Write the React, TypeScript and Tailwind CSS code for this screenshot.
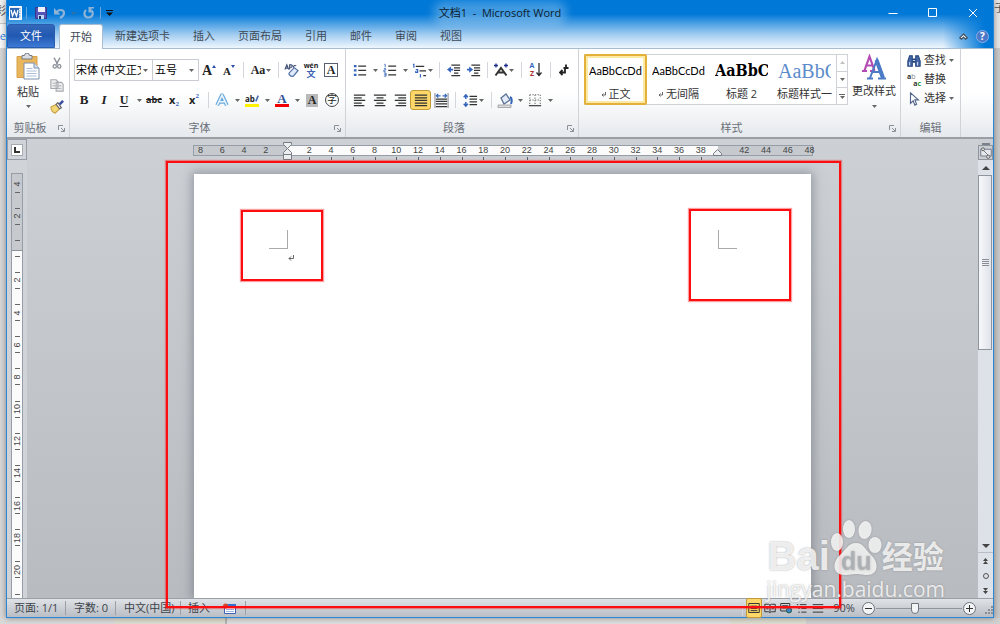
import type { ReactNode } from 'react';

const TABS = ['新建选项卡', '插入', '页面布局', '引用', '邮件', '审阅', '视图'];

// horizontal ruler goes from -8 to 48 in steps of two, vertical one from -4 to 20
const H_MARKS = Array.from({ length: 29 }, (_, i) => i * 2 - 8);
const V_MARKS = Array.from({ length: 13 }, (_, i) => i * 2 - 4);

function Caret({ className = '' }: { className?: string }) {
  return (
    <svg viewBox="0 0 5 3" className={`h-[3px] w-[5px] shrink-0 ${className}`} fill="#666">
      <path d="M0 0h5L2.5 3z" />
    </svg>
  );
}

function Drop({ label }: { label: string }) {
  return (
    <button aria-label={label} className="flex h-5 w-[10px] items-center justify-center">
      <Caret />
    </button>
  );
}

function Tool({ label, children, className = 'w-5' }: { label: string; children: ReactNode; className?: string }) {
  return (
    <button aria-label={label} title={label} className={`flex h-5 shrink-0 items-center justify-center text-[#222] ${className}`}>
      {children}
    </button>
  );
}

function Sep({ className = 'w-2' }: { className?: string }) {
  return (
    <span className={`flex h-4 shrink-0 justify-center ${className}`}>
      <span className="w-px bg-[#d3d6da]" />
    </span>
  );
}

function Icon({ children, className = 'size-4' }: { children: ReactNode; className?: string }) {
  return (
    <svg viewBox="0 0 16 16" className={`shrink-0 ${className}`} fill="none" stroke="#333" strokeWidth="1.3">
      {children}
    </svg>
  );
}

function Group({ title, launcher = true, className, children }: { title: string; launcher?: boolean; className: string; children: ReactNode }) {
  return (
    <section className={`flex shrink-0 flex-col border-r border-[#d0d3d8] ${className}`}>
      <div className="h-[70px]">{children}</div>
      <div className="flex h-[18px] items-center text-[#6a6f78]">
        <h2 className="flex-1 text-center">{title}</h2>
        {launcher && (
          <button aria-label={`${title}选项`} className="flex w-4 justify-center">
            <svg viewBox="0 0 7 7" className="size-[7px]" fill="none" stroke="#8b9097">
              <path d="M.5 5V.5H5M3 3l3 3M6.5 3v3.5H3" />
            </svg>
          </button>
        )}
      </div>
    </section>
  );
}

function TitleBar() {
  return (
    <div className="grid h-6 grid-cols-[1fr_auto_1fr] items-center pt-[2px]">
      <div className="flex items-center pl-[2px]">
        <svg viewBox="0 0 13 14" className="h-[14px] w-[13px]">
          <path d="M.5.5h12v13H.5z" fill="#e6f1fc" stroke="#fff" />
          <path d="M10 2.500h1.500M10 5h1.500M10 7.500h1.500M10 10h1.500" stroke="#7ea7d8" />
          <path d="M1 2h9v10H1z" fill="#2c66b5" />
          <path d="M2 4l1.500 6 2-5 2 5L9 4" fill="none" stroke="#fff" strokeWidth="1.3" />
        </svg>
        <span className="mx-1 h-3 w-px bg-[#6fa5d6]" />
        <Tool label="保存" className="ml-[2px] w-4">
          <svg viewBox="0 0 12 12" className="size-3">
            <path d="M.5.5h11v11H.5z" fill="#5552b8" stroke="#3b388a" />
            <path d="M3 0h7v5H3z" fill="#eef3fb" />
            <path d="M3 8h6v4H3z" fill="#b9d7f5" />
            <path d="M4 9h2v3H4z" fill="#222c66" />
          </svg>
        </Tool>
        <Tool label="撤消" className="w-[22px]">
          <svg viewBox="0 0 12 12" className="size-3" fill="none" stroke="#8fb3d6" strokeWidth="2.2">
            <path d="M3 5c2-3 7-2.500 7 1 0 2.500-2 4-4 5" />
            <path d="M0 1v6.500h6.500z" fill="#8fb3d6" stroke="none" />
          </svg>
        </Tool>
        <Caret className="opacity-50" />
        <Tool label="重复" className="ml-[2px] w-[22px]">
          <svg viewBox="0 0 12 12" className="size-3" fill="none" stroke="#8fb3d6" strokeWidth="2.2">
            <path d="M3 3C0 6 1.500 10.500 5.500 10.500S11 6 8.500 3.500" />
            <path d="M5.500 0h5.500v1.500H8.500v4h-3z" fill="#8fb3d6" stroke="none" />
          </svg>
        </Tool>
        <span className="h-3 w-px bg-[#6fa5d6]" />
        <Tool label="自定义快速访问工具栏" className="w-4">
          <svg viewBox="0 0 7 6" className="h-[6px] w-[7px]" fill="#111">
            <path d="M0 0h7v1H0zM0 2.500h7L3.500 6z" />
          </svg>
        </Tool>
      </div>
      <h1 className="rounded-full bg-white/25 text-[11px] leading-3 whitespace-pre text-[#0d1c2c] shadow-[0_0_8px_6px_rgba(255,255,255,0.25)]">
        文档1  -  Microsoft Word
      </h1>
      <div className="flex justify-end">
        <Tool label="最小化" className="w-10">
          <svg viewBox="0 0 10 10" className="size-[10px]" stroke="#fff"><path d="M.5 5.500h9" /></svg>
        </Tool>
        <Tool label="最大化" className="w-10">
          <svg viewBox="0 0 10 10" className="size-[10px]" stroke="#fff" fill="none"><path d="M.5.5h8v8h-8z" /></svg>
        </Tool>
        <Tool label="关闭" className="w-10">
          <svg viewBox="0 0 10 10" className="size-[10px]" stroke="#fff"><path d="M1 1l8 8M9 1L1 9" /></svg>
        </Tool>
      </div>
    </div>
  );
}

function TabRow() {
  return (
    <nav className="flex h-[25px] border-b border-[#a9bdd2] text-[#404a56]">
      <button className="w-12 rounded-t-[3px] border border-[#2a5cae] bg-linear-to-b from-[#3468ba] via-[#2158b2] to-[#3d7bd6] text-white">文件</button>
      <button className="-mb-px ml-1 w-11 rounded-t-[3px] border border-b-0 border-[#a9bdd2] bg-white">开始</button>
      <div className="flex gap-px pl-px">
        {TABS.map((t) => (
          <button key={t} className="px-[11px]">{t}</button>
        ))}
      </div>
      <div className="ml-auto flex items-center gap-2 pr-1">
        <button aria-label="功能区最小化">
          <svg viewBox="0 0 9 7" className="h-[7px] w-[9px]" fill="#fff" stroke="#3f4c5c" strokeWidth="1.2">
            <path d="M4.500 1L8.300 4.800 6.500 6.200l-2-2-2 2L.7 4.800z" />
          </svg>
        </button>
        <button aria-label="帮助" className="flex size-[13px] items-center justify-center rounded-full border border-[#86aee6] bg-[#4c78c8] text-[10px] leading-none font-bold text-white">?</button>
      </div>
    </nav>
  );
}

function Clipboard() {
  return (
    <Group title="剪贴板" className="w-[63px]">
      <div className="flex">
        <button className="flex w-[42px] flex-col items-center pt-1">
          <svg viewBox="0 0 24 27" className="h-[27px] w-6">
            <path d="M1 3.500h20v21H1z" fill="#e9b65c" stroke="#d6a14c" />
            <path d="M6 2.500h2.500a2.500 2.500 0 0 1 5 0H16V6H6z" fill="#d9dde2" stroke="#767c85" />
            <path d="M8 10h10l5 5v11H8z" fill="#fff" stroke="#7d90ab" />
            <path d="M18 10v5h5" fill="#d5e2f2" stroke="#7d90ab" />
            <path d="M10.500 15.500h6M10.500 18h10M10.500 20.500h10M10.500 23h10" stroke="#a9bddb" />
          </svg>
          <span className="mt-1 leading-4 text-[#333]">粘贴</span>
          <Caret className="mt-[5px]" />
        </button>
        <div className="flex flex-col gap-[2px] pt-1">
          <Tool label="剪切" className="w-4">
            <Icon className="size-3"><path d="M4 1l5 9M12 1L7 10" stroke="#8c9199" strokeWidth="2" /><circle cx="5" cy="12.500" r="2.200" stroke="#8c9199" strokeWidth="1.7" /><circle cx="11" cy="12.500" r="2.200" stroke="#8c9199" strokeWidth="1.7" /></Icon>
          </Tool>
          <Tool label="复制" className="w-4">
            <Icon className="size-[14px]"><path d="M1 2h6l2 2v8H1zM7 5h6l2 2v8H7z" fill="#eee" stroke="#a5a9af" /><path d="M3 6h3M3 9h3M9 9h4M9 12h4" stroke="#b5b9bf" /></Icon>
          </Tool>
          <Tool label="格式刷" className="w-4">
            <Icon className="size-[14px]"><path d="M1 8l6-3 4 5-5 5c-3-1-5-4-5-7z" fill="#f3d777" stroke="#c9a346" /><path d="M7 5l4 5 2-1-4-6z" fill="#fff" stroke="#666" /><path d="M11 5l4-4" stroke="#3c4fa0" strokeWidth="3" /></Icon>
          </Tool>
        </div>
      </div>
    </Group>
  );
}

function FontGroup() {
  return (
    <Group title="字体" className="w-[276px]">
      <div className="flex flex-col gap-2 pt-[10px] pl-1 font-['Liberation_Serif','Noto_Sans_CJK_SC',serif]">
        <div className="flex h-[22px] items-center">
          <div className="flex h-[22px] w-[79px] items-center border border-[#c9cdd3] bg-white pr-1 font-['Open_Sans','Noto_Sans_CJK_SC',sans-serif] text-black">
            <select aria-label="字体" className="h-5 w-[66px] appearance-none overflow-hidden pl-px text-[11px]"><option>宋体 (中文正文)</option></select>
            <Caret className="ml-auto" />
          </div>
          <div className="-ml-px flex h-[22px] w-[47px] items-center border border-[#c9cdd3] bg-white pr-1 font-['Open_Sans','Noto_Sans_CJK_SC',sans-serif] text-black">
            <select aria-label="字号" className="h-5 w-9 appearance-none pl-[2px] text-[11px]"><option>五号</option></select>
            <Caret />
          </div>
          <Tool label="增大字体">
            <span className="text-[14px] font-bold">A</span>
            <svg viewBox="0 0 4 3" className="mb-2 h-[3px] w-1" fill="#2b4fa8"><path d="M0 3h4L2 0z" /></svg>
          </Tool>
          <Tool label="缩小字体">
            <span className="pt-[2px] text-[11px] font-bold">A</span>
            <svg viewBox="0 0 4 3" className="mb-2 h-[3px] w-1" fill="#2b4fa8"><path d="M0 0h4L2 3z" /></svg>
          </Tool>
          <Sep />
          <Tool label="更改大小写" className="w-7"><span className="text-[12px] font-bold">Aa</span><Caret className="ml-px" /></Tool>
          <Sep className="w-[6px]" />
          <Tool label="清除格式">
            <Icon className="size-[15px]"><path d="M1 7l2-5 2 5M2 5.500h2M6 7V2h2l1 1-1 1.500H6M13 3c-2-1-3 0-3 2" stroke="#3f4f77" strokeWidth="1.2" /><path d="M6 10l5-5 4 3-5 6c-3 1-6-2-4-4z" fill="#dfe9f7" stroke="#5574a8" /></Icon>
          </Tool>
          <Tool label="拼音指南">
            <span className="flex flex-col items-center font-['Open_Sans','Noto_Sans_CJK_SC',sans-serif]">
              <span className="text-[7px] leading-[7px] font-bold">wén</span>
              <span className="text-[9px] leading-[9px] font-bold text-[#3a5fb5]">文</span>
            </span>
          </Tool>
          <Tool label="字符边框"><span className="flex size-[14px] items-center justify-center border border-[#555f70] text-[12px] font-bold">A</span></Tool>
        </div>
        <div className="flex h-[22px] items-center">
          <Tool label="加粗"><span className="text-[13px] font-black">B</span></Tool>
          <Tool label="倾斜"><span className="text-[13px] font-bold italic">I</span></Tool>
          <Tool label="下划线"><span className="text-[12px] font-bold underline underline-offset-2">U</span></Tool>
          <Drop label="下划线样式" />
          <Tool label="删除线"><span className="font-['Open_Sans',sans-serif] text-[9px] font-bold line-through">abc</span></Tool>
          <Tool label="下标"><span className="font-['Open_Sans',sans-serif] text-[11px] font-bold">x</span><span className="pt-2 text-[7px] font-bold text-[#2b5fc0]">2</span></Tool>
          <Tool label="上标"><span className="font-['Open_Sans',sans-serif] text-[11px] font-bold">x</span><span className="pb-2 text-[7px] font-bold text-[#2b5fc0]">2</span></Tool>
          <Sep />
          <Tool label="文本效果">
            <Icon className="size-[14px]"><path d="M2.500 14L8 2.500 13.500 14M5 10h6" stroke="#69a9dd" strokeWidth="4.500" strokeLinejoin="round" /><path d="M2.500 14L8 2.500 13.500 14M5 10h6" stroke="#eaf5fd" strokeWidth="1.8" /></Icon>
          </Tool>
          <Drop label="文本效果选项" />
          <Tool label="突出显示">
            <span className="flex w-[14px] flex-col border-b-[3px] border-[#fff200]">
              <span className="flex items-center font-['Open_Sans',sans-serif] text-[8px] leading-[10px] font-bold">
                ab
                <svg viewBox="0 0 5 9" className="h-[9px] w-[5px]" stroke="#4a6fae" strokeWidth="2"><path d="M4 1L1 8" /></svg>
              </span>
            </span>
          </Tool>
          <Drop label="突出显示颜色" />
          <Tool label="字体颜色"><span className="flex w-[14px] justify-center border-b-[3px] border-[#f00000] text-[13px] leading-[11px] font-bold text-[#2c4f95]">A</span></Tool>
          <Drop label="字体颜色选项" />
          <Tool label="字符底纹"><span className="flex h-[13px] w-3 items-center justify-center bg-[#b9b9b9] text-[12px] font-bold">A</span></Tool>
          <Tool label="带圈字符"><span className="flex size-[14px] items-center justify-center rounded-full border border-[#444] text-[10px] leading-none">字</span></Tool>
        </div>
      </div>
    </Group>
  );
}

function ParagraphGroup() {
  return (
    <Group title="段落" className="w-[233px]">
      <div className="flex flex-col gap-2 pt-[10px] pl-1">
        <div className="flex h-[22px] items-center">
          <Tool label="项目符号"><Icon className="size-[14px]"><path d="M6 3.500h9M6 8.500h9M6 13.500h9" /><path d="M1 3.500h3M1 8.500h3M1 13.500h3" stroke="#3566bd" strokeWidth="2.500" /></Icon></Tool>
          <Drop label="项目符号库" />
          <Tool label="编号"><Icon className="size-[14px]"><path d="M6 3.500h9M6 8.500h9M6 13.500h9" /><path d="M1.500 1.500h1v3.500M1 6.500h2v1.500H1V10h2M1 11.500h2.500V15H1M1.500 13.300h2" stroke="#3566bd" strokeWidth="1" /></Icon></Tool>
          <Drop label="编号库" />
          <Tool label="多级列表" className="w-6"><Icon className="size-[15px]"><path d="M4 3.500h9M8 8.500h7M12 13.500h3" /><path d="M1 1.500h1V5M4 7h2v3H4V8.500M9 12v3.500" stroke="#3566bd" /></Icon><Caret className="ml-px" /></Tool>
          <Sep className="w-[10px]" />
          <Tool label="减少缩进量"><Icon className="size-[14px]"><path d="M5 2.500h10M8 5.500h7M8 8.500h7M8 11.500h5M5 14.500h10" /><path d="M0 7.500L4.500 4v2.500H7v2H4.500V11z" fill="#3566bd" stroke="none" /></Icon></Tool>
          <Tool label="增加缩进量"><Icon className="size-[14px]"><path d="M5 2.500h10M8 5.500h7M8 8.500h7M8 11.500h5M5 14.500h10" /><path d="M7 7.500L2.500 4v2.500H0v2h2.500V11z" fill="#3566bd" stroke="none" /></Icon></Tool>
          <Sep className="w-[6px]" />
          <Tool label="中文版式" className="w-[26px]"><Icon><path d="M2.500 13.500L8 6l5.500 7.500M5 10.500h6" strokeWidth="2" /><path d="M1 3.500h4M11 3.500h4M3 1.500v4M13 1.500v4" stroke="#1d2d8c" strokeWidth="1.3" /></Icon><Caret /></Tool>
          <Sep className="w-[10px]" />
          <Tool label="排序">
            <span className="flex flex-col font-['Open_Sans',sans-serif] text-[7px] leading-[8px] font-bold"><span className="text-[#3566bd]">A</span><span className="text-[#a33030]">Z</span></span>
            <svg viewBox="0 0 6 14" className="ml-[2px] h-[14px] w-[6px]" stroke="#222" fill="none"><path d="M3 0v12M.5 9.500L3 12.500l2.500-3" strokeWidth="1.2" /></svg>
          </Tool>
          <Sep />
          <Tool label="显示编辑标记"><svg viewBox="0 0 10 12" className="h-3 w-[10px]" fill="none" stroke="#222" strokeWidth="1.8"><path d="M7 .5v3.500M4.500 4h5M6 4v4.500H2M3.500 6L1 8.500 3.500 11" /></svg></Tool>
        </div>
        <div className="flex h-[22px] items-center">
          <Tool label="左对齐"><Icon className="size-[14px]"><path d="M1 2.500h13M1 5.500h9M1 8.500h13M1 11.500h9M1 14.500h12" /></Icon></Tool>
          <Tool label="居中"><Icon className="size-[14px]"><path d="M1 2.500h14M4 5.500h8M1 8.500h14M4 11.500h8M2 14.500h12" /></Icon></Tool>
          <Tool label="右对齐"><Icon className="size-[14px]"><path d="M2 2.500h13M6 5.500h9M2 8.500h13M6 11.500h9M3 14.500h12" /></Icon></Tool>
          <Tool label="两端对齐" className="w-[21px] rounded-[3px] border border-[#c29a3c] bg-[#fdd768]"><Icon className="size-[14px]"><path d="M1 2.500h14M1 5.500h14M1 8.500h14M1 11.500h14M1 14.500h14" /></Icon></Tool>
          <Tool label="分散对齐"><Icon className="size-[15px]"><path d="M2 6.500h12M2 9h12M2 11.500h12M2 14.500h12" /><path d="M1 0v16M15 0v16" stroke="#7c8087" strokeWidth="1" /><path d="M3 3h4M9 3h4M4.500 1L2.500 3l2 2M11.500 1l2 2-2 2" stroke="#3566bd" /></Icon></Tool>
          <Sep />
          <Tool label="行距" className="w-7"><Icon className="size-[15px]"><path d="M7 3.500h8M7 6.500h8M7 9.500h8M7 12.500h8" /><path d="M3 2v4.500M3 9.500V14M.8 4.500L3 2l2.200 2.500M.8 11.500L3 14l2.200-2.500" stroke="#3566bd" strokeWidth="1.6" /></Icon><Caret className="ml-px" /></Tool>
          <Sep />
          <Tool label="底纹"><Icon><path d="M4 6l5-4 4 6-6 4z" fill="#e3ecf8" stroke="#5b7296" /><path d="M13 5c2 1 2 4 1 7" stroke="#3566bd" strokeWidth="2" /><path d="M1 13h13v2.500H1z" fill="#ddd" stroke="#999" strokeWidth=".8" /></Icon></Tool>
          <Drop label="底纹颜色" />
          <Tool label="边框"><Icon className="size-[14px]"><path d="M2 2h12v12M2 2v12M8 2v12M2 8h12" stroke="#777" strokeDasharray="1.500 1.500" /><path d="M1 14.500h14" /></Icon></Tool>
          <Drop label="边框选项" />
        </div>
      </div>
    </Group>
  );
}

const STYLES = [
  { name: '正文', mark: true, sample: 'AaBbCcDd', look: "font-['Lato',sans-serif] text-[11px] text-black" },
  { name: '无间隔', mark: true, sample: 'AaBbCcDd', look: "font-['Lato',sans-serif] text-[11px] text-black" },
  { name: '标题 2', mark: false, sample: 'AaBbC', look: "font-['DejaVu_Serif_Condensed','DejaVu_Serif',serif] text-[16px] font-bold text-black" },
  { name: '标题样式一', mark: false, sample: 'AaBbC', look: "font-['Liberation_Serif',serif] text-[20px] text-[#5b8bcb]" },
];

function StylesGroup() {
  return (
    <Group title="样式" className="w-[322px]">
      <div className="flex pt-[5px] pl-[5px]">
        <div className="flex h-[51px] border border-[#cfd3d8] bg-white">
          {STYLES.map((s, i) => (
            <button key={s.name} className={`-my-px flex w-[63px] flex-col items-center rounded-[2px] border-2 ${i === 0 ? '-ml-px border-[#e3b13a] shadow-[inset_0_0_0_2px_#fde9a6]' : 'border-transparent'}`}>
              <span className={`flex h-[30px] w-[53px] shrink-0 items-center overflow-hidden whitespace-nowrap ${s.look}`}>{s.sample}</span>
              <span className="flex items-center gap-[3px] text-[11px] leading-4 whitespace-nowrap text-[#333]">
                {s.mark && (
                  <svg viewBox="0 0 5 5" className="size-[5px]" fill="none" stroke="#666"><path d="M4.500 0v3H1M2.500 1.500L1 3l1.500 1.500" /></svg>
                )}
                {s.name}
              </span>
            </button>
          ))}
          <div className="flex w-[11px] flex-col divide-y divide-[#cfd3d8] border-l border-[#cfd3d8]">
            <button aria-label="上一行" className="flex flex-1 items-center justify-center"><Caret className="rotate-180 opacity-40" /></button>
            <button aria-label="下一行" className="flex flex-1 items-center justify-center"><Caret /></button>
            <button aria-label="其他样式" className="flex flex-1 flex-col items-center justify-center gap-px"><span className="h-px w-[6px] bg-[#666]" /><Caret /></button>
          </div>
        </div>
        <button className="flex flex-1 flex-col items-center">
          <svg viewBox="0 0 26 26" className="size-[26px]" fill="none">
            <path d="M1 17h5M9 17h5M3.500 16.500L8.500 2.500l5 14M5.500 11.500h6" stroke="#b44ab4" strokeWidth="2.2" />
            <path d="M6 24.500h6M17 24.500h8M9 24L16 5.500l6.500 19" stroke="#4b7ac6" strokeWidth="2" />
            <path d="M15.500 6l6.500 18" stroke="#4b7ac6" strokeWidth="4" />
            <path d="M11 18h8" stroke="#4b7ac6" strokeWidth="2" />
          </svg>
          <span className="mt-[3px] leading-4 whitespace-nowrap text-[#333]">更改样式</span>
          <Caret className="mt-[6px]" />
        </button>
      </div>
    </Group>
  );
}

function EditingGroup() {
  return (
    <Group title="编辑" launcher={false} className="w-[60px]">
      <div className="flex flex-col pt-[2px] pl-[6px] text-[#333]">
        <button className="flex h-[19px] items-center gap-[3px]">
          <Icon className="size-[14px]"><path d="M1 14V8l2-6h3v12zM10 2h3l2 6v6h-5z" fill="#4a69a8" stroke="#24457e" /><path d="M6 6h4M6 9h4" stroke="#24457e" strokeWidth="2" /><path d="M3 9v4M12 9v4" stroke="#c4d6f2" /></Icon>
          查找
          <Caret />
        </button>
        <button className="flex h-[19px] items-center gap-[3px]">
          <span className="flex w-[14px] flex-col font-['Open_Sans',sans-serif] text-[7px] leading-[7px] font-bold">
            <span className="text-left">a<span className="font-normal text-[#888]">b</span></span>
            <span className="text-right">a<span className="text-[#2f9a3a]">c</span></span>
          </span>
          替换
        </button>
        <button className="flex h-[19px] items-center gap-[3px]">
          <Icon className="size-[14px]"><path d="M4 1v12l3-3 2 5 2-1-2-5h4z" fill="#fff" stroke="#53658a" /></Icon>
          选择
          <Caret />
        </button>
      </div>
    </Group>
  );
}

function HorizontalRuler() {
  return (
    <div className="relative w-[620px] shrink-0 pt-[6px]">
      <div className="flex h-[11px] items-center justify-between border border-[#979da6] bg-[linear-gradient(to_right,#c6cacf_94px,#fbfbfb_94px,#fbfbfb_524px,#c6cacf_524px)] pr-[2px] pl-[7px] font-['Liberation_Sans',sans-serif] text-[9px] text-[#444]">
        {H_MARKS.map((n) => (
          <span key={n} className="flex w-0 justify-center">{n === 0 || n === 40 ? '' : Math.abs(n)}</span>
        ))}
      </div>
      <div className="flex h-1 items-end justify-between pr-[2px] pl-2">
        {H_MARKS.map((n) => (
          <span key={n} className={`h-[3px] w-px ${n > 0 && n < 40 ? 'bg-[#5d636b]' : ''}`} />
        ))}
      </div>
      <svg viewBox="0 0 9 18" className="absolute top-[3px] left-[90px] h-[18px] w-[9px]" fill="#eceef0" stroke="#777d86">
        <path d="M.5.5h8v2l-4 4-4-4zM4.500 6.500l4 4v2h-8v-2zM.5 12.500h8v5h-8z" />
      </svg>
      <svg viewBox="0 0 9 7" className="absolute top-[10px] right-[91px] h-[7px] w-[9px]" fill="#eceef0" stroke="#777d86">
        <path d="M4.500.5l4 4v2h-8v-2z" />
      </svg>
    </div>
  );
}

function VerticalRuler() {
  return (
    <div className="flex w-[12px] flex-1 flex-col border border-b-0 border-[#979da6] bg-[linear-gradient(#c6cacf_76px,#8d939b_76px,#8d939b_77px,#fbfbfb_77px)] pt-[6px] font-['Liberation_Sans',sans-serif] text-[9px] leading-none text-[#444]">
      {V_MARKS.map((n) => (
        <div key={n} className="grid flex-1 grid-rows-4 place-items-center">
          <span className="flex h-0 w-0 -rotate-90 items-center justify-center">{n === 0 ? '' : Math.abs(n)}</span>
          <span className="h-px w-[5px] bg-[#666]" />
          <span />
          <span className="h-px w-[5px] bg-[#666]" />
        </div>
      ))}
    </div>
  );
}

function ScrollBar() {
  return (
    <div className="flex w-[15px] shrink-0 flex-col items-center bg-[#dde1e8]">
      <div className="flex w-full flex-col items-center bg-[#cbcfd4] pt-1">
        <span className="h-[2px] w-2 bg-[#7b828b]" />
        <button aria-label="标尺" className="flex h-[15px] w-full items-center justify-center border border-[#8f959d]">
          <Icon className="size-3"><path d="M1 3h14v9H1z" fill="#e6e8eb" stroke="#73798a" /><path d="M3 3l9 9" stroke="#73798a" /><circle cx="4" cy="3" r="2" fill="#ddd" stroke="#666" /><circle cx="11" cy="13" r="2.200" fill="#ddd" stroke="#666" /></Icon>
        </button>
      </div>
      <button aria-label="向上滚动" className="flex h-[15px] items-center"><svg viewBox="0 0 8 4" className="h-1 w-2" fill="#444"><path d="M0 4h8L4 0z" /></svg></button>
      <div className="w-full flex-1">
        <div className="flex h-[48%] w-[14px] flex-col items-center justify-center gap-px border border-[#8f959d] bg-linear-to-r from-[#f7f8fa] to-[#dfe3ea]">
          <span className="h-px w-[7px] bg-[#8a8f97]" />
          <span className="h-px w-[7px] bg-[#8a8f97]" />
          <span className="h-px w-[7px] bg-[#8a8f97]" />
          <span className="h-px w-[7px] bg-[#8a8f97]" />
        </div>
      </div>
      <button aria-label="向下滚动" className="flex h-[14px] w-full items-center justify-center border-b border-[#b9bec6]"><svg viewBox="0 0 8 4" className="h-1 w-2" fill="#444"><path d="M0 0h8L4 4z" /></svg></button>
      <button aria-label="前一页" className="flex h-[15px] items-center"><svg viewBox="0 0 5 6" className="h-[6px] w-[5px]" fill="#444"><path d="M0 3h5L2.500 0zM0 6h5L2.500 3z" /></svg></button>
      <button aria-label="选择浏览对象" className="flex h-[15px] items-center"><span className="size-[6px] rounded-full border border-[#555]" /></button>
      <button aria-label="下一页" className="flex h-[15px] items-center"><svg viewBox="0 0 5 6" className="h-[6px] w-[5px]" fill="#444"><path d="M0 0h5L2.500 3zM0 3h5L2.500 6z" /></svg></button>
    </div>
  );
}

function Page() {
  return (
    <article className="relative w-[617px] flex-1 bg-white shadow-[0_0_10px_2px_rgba(90,95,105,0.5)]">
      <span className="absolute top-14 left-[75px] h-[19px] w-[19px] border-r border-b border-[#aaa]" />
      <span className="absolute top-14 right-[74px] h-[19px] w-[19px] border-b border-l border-[#aaa]" />
      <svg viewBox="0 0 7 7" className="absolute top-[81px] left-[94px] size-[7px]" fill="none" stroke="#666"><path d="M5.500 0v3.500H1M3 1.500l-2 2 2 2" /></svg>
      <span className="absolute top-9 left-[47px] h-[71px] w-[82px] border-2 border-[#fb0d10] shadow-[0_0_1px_1px_rgba(251,13,16,0.4)]" />
      <span className="absolute top-[35px] right-5 h-[92px] w-[102px] border-2 border-[#fb0d10] shadow-[0_0_1px_1px_rgba(251,13,16,0.4)]" />
    </article>
  );
}

function StatusBar() {
  const item = 'border-r border-[#9ba0a7] h-[14px] flex items-center';
  return (
    <footer className="flex h-[19px] shrink-0 items-center border-t border-[#9ba0a7] bg-linear-to-b from-[#dfe2e6] to-[#b9bec5] text-[#3d434b]">
      <span className={`${item} w-[59px] pl-[7px]`}>页面: 1/1</span>
      <span className={`${item} w-[50px] pl-2`}>字数: 0</span>
      <span className={`${item} w-[65px] pl-2`}>中文(中国)</span>
      <span className={`${item} w-[65px] gap-[13px] pl-[7px]`}>
        插入
        <svg viewBox="0 0 13 11" className="h-[11px] w-[13px]"><path d="M1.500 1.500h11v9h-11z" fill="#fff" stroke="#3a62b5" /><path d="M1 1h12v3H1z" fill="#3a6fd0" /><path d="M3 6.500h8M3 8.500h8" stroke="#9bb6e6" /><circle cx="2.500" cy="3" r="2.500" fill="#d8492c" /></svg>
      </span>
      <div className="ml-auto flex items-center">
        <Sep />
        <Tool label="页面视图" className="w-4 rounded-[2px] border border-[#c29a3c] bg-[#fdd768]"><Icon className="size-3"><path d="M1 2h14v12H1zM3.500 5.500h9M3.500 8.500h9M3.500 11.500h9" /></Icon></Tool>
        <Tool label="阅读版式视图" className="w-4"><Icon className="size-3"><path d="M1 3h5l2 1 2-1h5v10h-5l-2 1-2-1H1zM8 4v9M3 6h3M3 9h3M10 6h3M10 9h3" /></Icon></Tool>
        <Tool label="Web 版式视图" className="w-4"><Icon className="size-3"><path d="M1 2h12v10H1zM3 5h8M3 8h5" /><circle cx="12" cy="11" r="3.500" fill="#3b86c7" stroke="#1e5b4a" /></Icon></Tool>
        <Tool label="大纲视图" className="w-4"><Icon className="size-3"><path d="M1 3.500h2M5 3.500h9M3 8.500h2M7 8.500h7M3 13.500h2M7 13.500h7" /></Icon></Tool>
        <Tool label="草稿" className="w-4"><Icon className="size-3"><path d="M1 3.500h14M1 8.500h14M1 13.500h14" /></Icon></Tool>
        <button className="w-9 text-center">90%</button>
        <button aria-label="缩小" className="flex size-[13px] items-center justify-center rounded-full border border-[#6d737b] bg-[#f3f4f6]"><span className="h-px w-[7px] bg-[#333]" /></button>
        <input
          type="range"
          aria-label="显示比例"
          min={0}
          max={100}
          defaultValue={45}
          className="mx-px h-3 w-[86px] appearance-none bg-[linear-gradient(#8f959d,#8f959d)] bg-[length:100%_1px] bg-center bg-no-repeat [&::-webkit-slider-thumb]:h-[11px] [&::-webkit-slider-thumb]:w-[8px] [&::-webkit-slider-thumb]:appearance-none [&::-webkit-slider-thumb]:rounded-b-[4px] [&::-webkit-slider-thumb]:border [&::-webkit-slider-thumb]:border-[#6d737b] [&::-webkit-slider-thumb]:bg-[#f3f4f6]"
        />
        <button aria-label="放大" className="flex size-[13px] items-center justify-center rounded-full border border-[#6d737b] bg-[#f3f4f6]">
          <svg viewBox="0 0 7 7" className="size-[7px]" stroke="#333"><path d="M0 3.500h7M3.500 0v7" /></svg>
        </button>
        <svg viewBox="0 0 10 10" className="mt-[5px] ml-[7px] size-[10px]" fill="#8b9097">
          <path d="M8 0h2v2H8zM5 3h2v2H5zM8 3h2v2H8zM2 6h2v2H2zM5 6h2v2H5zM8 6h2v2H8z" />
        </svg>
      </div>
    </footer>
  );
}

function Watermark() {
  return (
    <div className="pointer-events-none absolute right-[55px] bottom-[23px] flex flex-col items-center font-['Open_Sans','Noto_Sans_CJK_SC',sans-serif] text-white/80 [text-shadow:0_0_2px_rgba(120,120,120,0.7)]">
      <div className="flex h-[58px] items-end">
        <span className="font-['Liberation_Sans',sans-serif] text-[40px] leading-[42px] font-bold">Bai</span>
        <svg viewBox="0 0 52 58" className="h-[58px] w-[52px] drop-shadow-[0_0_1px_rgba(120,120,120,0.7)]" fill="#fff" fillOpacity=".8">
          <ellipse cx="7" cy="23" rx="6" ry="9" />
          <ellipse cx="19" cy="10" rx="6" ry="9" />
          <ellipse cx="35" cy="11" rx="6.500" ry="9" transform="rotate(10 35 11)" />
          <ellipse cx="45" cy="26" rx="6.500" ry="8" />
          <path d="M26 24c8 0 10 8 15 12 8 7 8 20-4 20-5 0-7-1-11-1s-6 1-11 1C2 56 2 43 10 36c6-5 8-12 16-12z" />
          <text x="11" y="51" fontSize="25" fontWeight="bold" fill="#aeb1b5" fontFamily="Liberation Sans, sans-serif">du</text>
        </svg>
        <span className="text-[31px] leading-[41px] font-bold">经验</span>
      </div>
      <p className="text-[21px] leading-6">jingyan.baidu.com</p>
    </div>
  );
}

export default function App() {
  return (
    <div className="relative flex h-screen overflow-hidden bg-[linear-gradient(to_right,#d9d9d9_114px,#dcdcd0_114px,#dcdcd0_225px,#b5b5b5_225px,#b5b5b5_227px,#dedede_227px,#dedede_730px,#dcdcd0_730px,#dcdcd0_806px,#d0d0d0_806px)] pb-[6px] font-['Open_Sans','Noto_Sans_CJK_SC',sans-serif] text-[11px]">
      <aside className="flex w-[6px] shrink-0 flex-col overflow-hidden bg-[#d6d6d6]">
        <div className="flex h-6 items-center justify-end border-b border-[#c8c8c8] bg-[#efefef] text-[#555]">彩</div>
        <div className="flex h-6 items-center justify-end bg-[#f8f8f8] text-[#3b82e0]">e</div>
      </aside>

      <div className="relative flex min-w-0 flex-1 flex-col border border-t-0 border-[#2a86d8] shadow-[0_0_6px_rgba(0,0,0,0.4)]">
        <header className="shrink-0 bg-[linear-gradient(to_right,transparent_calc(100%-50px),#0078d7_calc(100%-8px)),linear-gradient(#0078d7_14px,#58a6e6_25px,#a5cef1_35px,#eef6fd_48px)]">
          <TitleBar />
          <TabRow />
        </header>
        <div className="flex shrink-0 overflow-hidden border-b-2 border-[#9a9fa6] bg-linear-to-b from-white from-50% to-[#e6e9ed]">
          <Clipboard />
          <FontGroup />
          <ParagraphGroup />
          <StylesGroup />
          <EditingGroup />
        </div>

        <main className="flex min-h-0 flex-1 bg-linear-to-b from-[#cdd1d6] to-[#b8bbc0]">
          <div className="flex w-5 shrink-0 flex-col items-center bg-[#d0d4d9]">
            <button aria-label="制表符" className="mb-[13px] flex h-[21px] w-5 items-center justify-center border border-[#979da6]">
              <span className="flex size-3 items-center justify-center border border-[#a5abb3] bg-white">
                <svg viewBox="0 0 6 6" className="size-[6px]" stroke="#333" strokeWidth="2"><path d="M1 0v5h5" fill="none" /></svg>
              </span>
            </button>
            <VerticalRuler />
          </div>
          <div className="flex min-w-0 flex-1 flex-col items-center overflow-hidden">
            <HorizontalRuler />
            <div className="h-[14px] shrink-0" />
            <Page />
          </div>
          <ScrollBar />
        </main>

        <StatusBar />
        <span className="pointer-events-none absolute top-[161px] bottom-[9px] left-[159px] w-[675px] border-2 border-[#fb0d10] shadow-[0_0_1px_1px_rgba(251,13,16,0.4)]" />
      </div>

      <aside className="w-[6px] shrink-0 overflow-hidden bg-[#c9c9c9]">
        <div className="flex h-12 bg-[#e6e6e6] text-[#555]">子</div>
      </aside>
      <Watermark />
    </div>
  );
}
